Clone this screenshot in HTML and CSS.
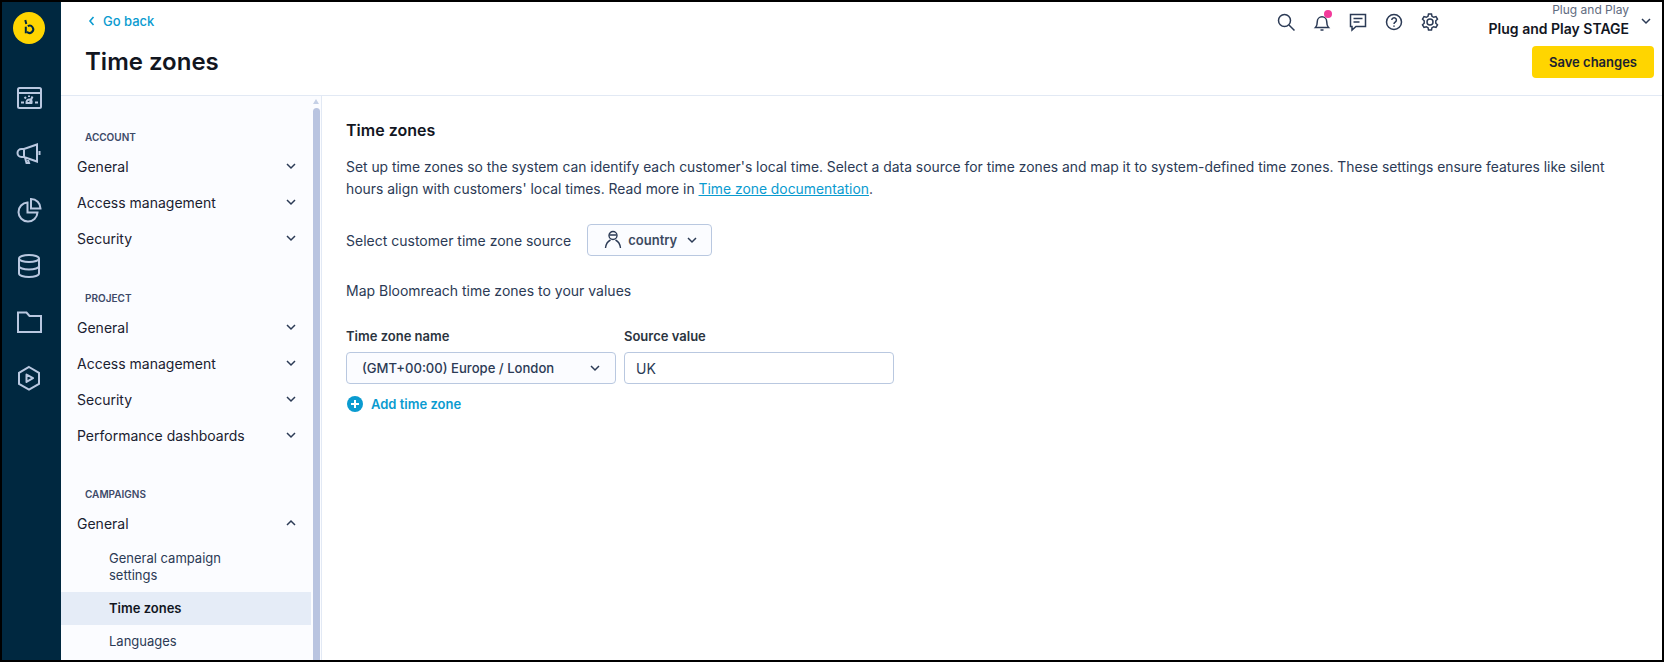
FILE: index.html
```html
<!DOCTYPE html>
<html lang="en">
<head>
<meta charset="utf-8">
<title>Time zones</title>
<link rel="stylesheet" href="styles.css">
</head>
<body>
<div class="app">
  <aside class="rail">
    <div class="logo">
      <svg width="32" height="32" viewBox="0 0 32 32" fill="none" stroke="#002840" stroke-width="2"><path d="M12.300 8l1 4"/><path d="M12.800 14.700v6.600"/><path d="M14.800 14.200a3.600 3.600 0 1 1-.8 5.600"/></svg>
    </div>
    <nav class="rail-icons">
      <svg class="ri" width="26" height="26" viewBox="0 0 26 26"><rect x="2" y="3" width="23" height="20" rx="1.500"/><path d="M2 8h23M5 17.500h3M19 17.500h3M16.500 11.500l-2.500 5.500M8.500 12l1.500 1.500M13 10.500v1.500M10.500 18a3 3 0 0 1 3.500-3.500 3 3 0 0 1 1.500 3.500z"/></svg>
      <svg class="ri" width="26" height="26" viewBox="0 0 26 26"><path d="M21 3.500v17L8 16H5.500a3.500 3.500 0 0 1 0-8H8zM8 8v8M9 16.500l1.500 5.500h2.500l-1.500-4.500M23.500 10v4"/></svg>
      <svg class="ri" width="26" height="26" viewBox="0 0 26 26"><path d="M11.500 5.500a9.500 9.500 0 1 0 10 10h-10zM15 2v9.500h9.500A9.500 9.500 0 0 0 15 2z"/></svg>
      <svg class="ri" width="26" height="26" viewBox="0 0 26 26"><ellipse cx="13" cy="5.500" rx="10" ry="3.500"/><path d="M3 5.500v15c0 2 4.500 3.500 10 3.500s10-1.500 10-3.500v-15M3 13c0 2 4.500 3.500 10 3.500S23 15 23 13"/></svg>
      <svg class="ri" width="26" height="26" viewBox="0 0 26 26"><path d="M2 3.500h8.500l3 3.500H25v16H2z"/></svg>
      <svg class="ri" width="26" height="26" viewBox="0 0 26 26"><path d="M13 2l10 5.800v11L13 24.500 3 18.800v-11z"/><path d="M10.500 9.500l6.500 3.700-6.500 3.700z" stroke-linejoin="round"/></svg>
    </nav>
  </aside>
  <div class="main">
    <header class="top">
      <div class="top-left">
        <a class="back"><svg width="8" height="10" viewBox="0 0 8 10" fill="none" stroke="#0a9bd0" stroke-width="1.600"><path d="M5.500 1L2 5l3.500 4"/></svg>Go back</a>
        <h1>Time zones</h1>
      </div>
      <div class="top-right">
        <div class="top-row">
          <div class="tools">
            <svg class="ti" width="20" height="20" viewBox="0 0 20 20"><circle cx="8.500" cy="8.500" r="6"/><path d="M13 13l5.500 5.500"/></svg>
            <span class="bell">
              <svg class="ti" width="20" height="20" viewBox="0 0 20 20"><path d="M3.500 15.500c1.500-1.500 1.800-3 1.800-6a4.700 4.700 0 0 1 9.400 0c0 3 .3 4.500 1.800 6zM8.500 18h3"/></svg>
              <i class="dot"></i>
            </span>
            <svg class="ti" width="20" height="20" viewBox="0 0 20 20"><path d="M2.500 2.500h15v12H8l-4 3.500v-3.500H2.500zM5.500 6.500h9M5.500 10h6"/></svg>
            <svg class="ti" width="20" height="20" viewBox="0 0 20 20"><circle cx="10" cy="10" r="7.500"/><path d="M7.800 8a2.300 2.300 0 1 1 3.500 2c-.9.500-1.300 1-1.300 2M10 13.500v1.200"/></svg>
            <svg class="ti" width="20" height="20" viewBox="0 0 20 20"><circle cx="10" cy="10" r="3"/><path d="M8.500 2h3l.5 2.300 1.700 1 2.300-.7 1.500 2.600-1.700 1.600v2.400l1.700 1.600-1.500 2.600-2.300-.7-1.700 1-.5 2.300h-3L8 15.700l-1.700-1-2.300.7-1.500-2.600 1.700-1.600V8.800L2.500 7.200 4 4.600l2.300.7 1.700-1z"/></svg>
          </div>
          <div class="account">
            <div class="acc-names">
              <div class="acc-org">Plug and Play</div>
              <div class="acc-proj">Plug and Play STAGE</div>
            </div>
            <svg class="chev acc-chev" width="12" height="8" viewBox="0 0 12 8"><path d="M2 2l4 4 4-4"/></svg>
          </div>
        </div>
        <button class="save">Save changes</button>
      </div>
    </header>
    <div class="body">
      <nav class="side">
        <div class="side-inner">
          <div class="group group-first">
            <div class="label">ACCOUNT</div>
            <div class="item">General<svg class="chev" width="12" height="8" viewBox="0 0 12 8"><path d="M2 2l4 4 4-4"/></svg></div>
            <div class="item">Access management<svg class="chev" width="12" height="8" viewBox="0 0 12 8"><path d="M2 2l4 4 4-4"/></svg></div>
            <div class="item">Security<svg class="chev" width="12" height="8" viewBox="0 0 12 8"><path d="M2 2l4 4 4-4"/></svg></div>
          </div>
          <div class="group">
            <div class="label">PROJECT</div>
            <div class="item">General<svg class="chev" width="12" height="8" viewBox="0 0 12 8"><path d="M2 2l4 4 4-4"/></svg></div>
            <div class="item">Access management<svg class="chev" width="12" height="8" viewBox="0 0 12 8"><path d="M2 2l4 4 4-4"/></svg></div>
            <div class="item">Security<svg class="chev" width="12" height="8" viewBox="0 0 12 8"><path d="M2 2l4 4 4-4"/></svg></div>
            <div class="item">Performance dashboards<svg class="chev" width="12" height="8" viewBox="0 0 12 8"><path d="M2 2l4 4 4-4"/></svg></div>
          </div>
          <div class="group group-last">
            <div class="label">CAMPAIGNS</div>
            <div class="item">General<svg class="chev" width="12" height="8" viewBox="0 0 12 8"><path d="M2 6l4-4 4 4"/></svg></div>
            <div class="sub">General campaign<br>settings</div>
            <div class="sub sub-active">Time zones</div>
            <div class="sub">Languages</div>
          </div>
        </div>
        <div class="scroll">
          <i class="scroll-up"></i>
          <i class="scroll-thumb"></i>
        </div>
      </nav>
      <main class="content">
        <h2>Time zones</h2>
        <p class="intro">Set up time zones so the system can identify each customer's local time. Select a data source for time zones and map it to system-defined time zones. These settings ensure features like silent hours align with customers' local times. Read more in <a class="doc">Time zone documentation</a>.</p>
        <div class="source-row">
          <span>Select customer time zone source</span>
          <button class="source-btn">
            <svg class="person" width="18" height="20" viewBox="0 0 18 20"><circle cx="9" cy="5.500" r="4"/><path d="M5.500 5h7M1.500 18c.5-4.500 3-7 5-8M16.500 18c-.5-4.500-3-7-5-8"/></svg>
            country
            <svg class="chev" width="12" height="8" viewBox="0 0 12 8"><path d="M2 2l4 4 4-4"/></svg>
          </button>
        </div>
        <p class="map">Map Bloomreach time zones to your values</p>
        <div class="fields">
          <div class="field">
            <div class="f-label">Time zone name</div>
            <div class="select">(GMT+00:00) Europe / London<svg class="chev" width="12" height="8" viewBox="0 0 12 8"><path d="M2 2l4 4 4-4"/></svg></div>
          </div>
          <div class="field">
            <div class="f-label">Source value</div>
            <div class="input">UK</div>
          </div>
        </div>
        <a class="add">
          <svg width="16" height="16" viewBox="0 0 16 16"><circle cx="8" cy="8" r="8" fill="#0a9bd0"/><path d="M8 4v8M4 8h8" stroke="#fff" stroke-width="2"/></svg>
          Add time zone
        </a>
      </main>
    </div>
  </div>
</div>
</body>
</html>
```
FILE: styles.css
```css
* { box-sizing: border-box; }
html, body { margin: 0; height: 100%; overflow: hidden; }
body { font-family: Inter, "Liberation Sans", sans-serif; color: #1a2130; background: #fff; }
.app { display: flex; height: 662px; border: 2px solid #000; }

.rail { width: 59px; flex: none; background: #002840; display: flex; flex-direction: column; align-items: center; padding: 10px 5px 0 0; }
.logo { width: 32px; height: 32px; border-radius: 50%; background: #ffd500; }
.logo svg { display: block; }
.rail-icons { display: flex; flex-direction: column; gap: 30px; margin-top: 41px; }
.ri { display: block; fill: none; stroke: #b9c8e0; stroke-width: 2; }

.main { flex: 1; min-width: 0; display: flex; flex-direction: column; }
.top { height: 94px; flex: none; display: flex; justify-content: space-between; border-bottom: 1px solid #e2e9f4; }
.top-left { padding: 11px 0 0 27px; }
.back { display: flex; align-items: center; gap: 7px; font-size: 13px; font-weight: 500; line-height: 16px; color: #0a9bd0; }
h1 { margin: 17px 0 0 -3px; font-size: 24px; line-height: 32px; font-weight: 600; color: #12161f; }
.top-right { width: 386px; padding-right: 8px; display: flex; flex-direction: column; align-items: flex-end; }
.top-row { width: 100%; height: 44px; display: flex; justify-content: space-between; align-items: flex-start; }
.tools { margin-top: 10px; display: flex; gap: 16px; align-items: center; }
.ti { display: block; fill: none; stroke: #2b3a55; stroke-width: 1.500; }
.bell { position: relative; display: block; }
.dot { position: absolute; right: 0; top: -2px; width: 8px; height: 8px; border-radius: 50%; background: #f33a9b; }
.account { margin-right: 2px; display: flex; align-items: flex-start; gap: 11px; }
.acc-names { text-align: right; }
.acc-org { font-size: 12px; line-height: 16px; color: #5f6b80; }
.acc-proj { font-size: 14px; line-height: 20px; margin-top: 1px; font-weight: 600; color: #12161f; }
.acc-chev { margin-top: 15px; }
.save { width: 122px; height: 32px; border: 0; border-radius: 4px; background: #ffd500; font: 600 13px Inter, sans-serif; color: #1a2130; }

.chev { display: block; fill: none; stroke: #2b3a55; stroke-width: 1.500; flex: none; }

.body { flex: 1; min-height: 0; display: flex; }
.side { width: 261px; flex: none; display: flex; background: #fbfcff; border-right: 1px solid #e2e9f4; overflow: hidden; }
.side-inner { width: 250px; flex: none; padding-top: 33px; }
.group { margin-top: 34px; }
.group-first { margin-top: 0; }
.group-last { margin-top: 33px; }
.label { padding-left: 24px; font-size: 10px; font-weight: 600; line-height: 16px; color: #3d4a68; }
.item { height: 36px; margin-top: -1px; margin-bottom: 1px; padding: 0 14px 0 16px; display: flex; align-items: center; justify-content: space-between; font-size: 14px; color: #1a2130; }
.group .label + .item { margin-top: 3px; }
.sub { padding: 8px 20px 8px 48px; font-size: 13px; line-height: 17px; color: #2b3a55; }
.sub-active { background: #e5ecf7; font-weight: 600; color: #12161f; }
.sub:first-of-type { padding-top: 6px; }
.scroll { width: 7px; margin-left: 2px; }
.scroll-up { display: block; margin-top: 3px; width: 0; height: 0; border: 3px solid transparent; border-top: 0; border-bottom: 5px solid #c5d0e6; }
.scroll-thumb { display: block; margin-top: 4px; width: 7px; height: 560px; border-radius: 4px 4px 0 0; background: #b9c4e0; }

.content { flex: 1; min-width: 0; padding: 24px 0 0 24px; }
h2 { margin: 0; font-size: 16px; line-height: 20px; font-weight: 600; color: #12161f; }
.intro { margin: 16px 0 0; width: 1260px; font-size: 13.870px; line-height: 22px; color: #2b3a55; }
.doc { color: #0a9bd0; text-decoration: underline; }
.source-row { display: flex; align-items: center; gap: 16px; margin-top: 24px; font-size: 14px; color: #2b3a55; }
.source-btn { display: flex; align-items: center; width: 125px; height: 32px; padding: 0 0 0 16px; border: 1px solid #b9c8e0; border-radius: 4px; background: #fbfcff; font: 600 13px Inter, sans-serif; color: #3d4a5f; }
.person { display: block; fill: none; stroke: #2b3a55; stroke-width: 1.400; margin-right: 6px; }
.source-btn .chev { margin-left: 9px; }
.map { margin: 23px 0 0; font-size: 14px; line-height: 24px; color: #2b3a55; }
.fields { display: flex; gap: 8px; margin-top: 25px; }
.f-label { font-size: 13px; font-weight: 600; line-height: 16px; color: #2b3440; }
.select { margin-top: 8px; width: 270px; height: 32px; padding: 0 14px 0 15px; display: flex; align-items: center; justify-content: space-between; border: 1px solid #b9c8e0; border-radius: 4px; background: #fbfcff; font-size: 13.100px; font-weight: 500; color: #2b3a55; }
.input { margin-top: 8px; width: 270px; height: 32px; padding: 0 11px; display: flex; align-items: center; border: 1px solid #b9c8e0; border-radius: 4px; font-size: 14px; color: #2b3a55; }
.add { display: flex; align-items: center; gap: 8px; margin-top: 10px; padding-left: 1px; font-size: 13px; font-weight: 600; line-height: 20px; color: #0a9bd0; }
.add svg { display: block; }
```
